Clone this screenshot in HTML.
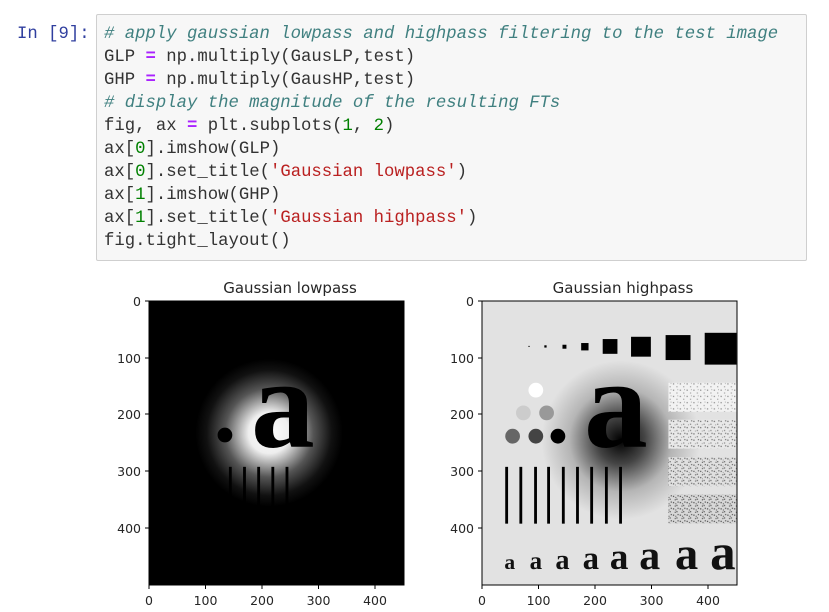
<!DOCTYPE html>
<html><head><meta charset="utf-8"><style>
body{margin:0;width:829px;height:612px;background:#fff;position:relative;overflow:hidden}
.prompt{position:absolute;left:17px;top:23px;font:17.3px/23px "Liberation Mono",monospace;color:#303f9f}
.code{position:absolute;left:96px;top:14px;width:711px;height:247px;background:#f7f7f7;border:1px solid #cfcfcf;border-radius:2px;box-sizing:border-box}
pre{margin:0;position:absolute;left:7px;top:8px;font:17.3px/23px "Liberation Mono",monospace;color:#333}
.c{color:#408080;font-style:italic}.o{color:#aa22ff;font-weight:bold}.n{color:#008000}.s{color:#ba2121}
svg{position:absolute;left:0;top:0}
.dj{font-family:"DejaVu Sans",sans-serif}
.sf{font-family:"Liberation Serif",serif}
</style></head><body>
<div class="prompt">In [9]:</div>
<div class="code"><pre><span class="c"># apply gaussian lowpass and highpass filtering to the test image</span>
GLP <span class="o">=</span> np.multiply(GausLP,test)
GHP <span class="o">=</span> np.multiply(GausHP,test)
<span class="c"># display the magnitude of the resulting FTs</span>
fig, ax <span class="o">=</span> plt.subplots(<span class="n">1</span>, <span class="n">2</span>)
ax[<span class="n">0</span>].imshow(GLP)
ax[<span class="n">0</span>].set_title(<span class="s">'Gaussian lowpass'</span>)
ax[<span class="n">1</span>].imshow(GHP)
ax[<span class="n">1</span>].set_title(<span class="s">'Gaussian highpass'</span>)
fig.tight_layout()</pre></div>

<svg width="829" height="612">
<defs>
<radialGradient id="glow" cx="212" cy="232" r="130" gradientUnits="userSpaceOnUse">
<stop offset="0" stop-color="#fff"/><stop offset="0.28" stop-color="#eee"/><stop offset="0.6" stop-color="#555"/><stop offset="0.85" stop-color="#111"/><stop offset="1" stop-color="#000"/></radialGradient>
<radialGradient id="halo" cx="245" cy="245" r="140" gradientUnits="userSpaceOnUse">
<stop offset="0" stop-color="#000"/><stop offset="0.3" stop-color="#444"/><stop offset="0.65" stop-color="#b5b5b5"/><stop offset="1" stop-color="#e2e2e2"/></radialGradient>
<pattern id="p1" width="12" height="11" patternUnits="userSpaceOnUse"><rect width="12" height="11" fill="#f2f2f2"/><rect x="1" y="2" width="2" height="2" fill="#777"/><rect x="7" y="7" width="2" height="2" fill="#999"/><rect x="9" y="1" width="1" height="2" fill="#888"/></pattern>
<pattern id="p2" width="12" height="11" patternUnits="userSpaceOnUse"><rect width="12" height="11" fill="#e8e8e8"/><rect x="1" y="2" width="2" height="2" fill="#555"/><rect x="7" y="7" width="2" height="2" fill="#777"/><rect x="9" y="1" width="2" height="2" fill="#666"/><rect x="4" y="8" width="1" height="2" fill="#777"/></pattern>
<pattern id="p3" width="12" height="11" patternUnits="userSpaceOnUse"><rect width="12" height="11" fill="#e0e0e0"/><rect x="1" y="2" width="2" height="2" fill="#444"/><rect x="7" y="7" width="2" height="2" fill="#555"/><rect x="9" y="1" width="2" height="2" fill="#555"/><rect x="4" y="8" width="2" height="2" fill="#666"/><rect x="5" y="4" width="1" height="2" fill="#777"/></pattern>
<pattern id="p4" width="12" height="11" patternUnits="userSpaceOnUse"><rect width="12" height="11" fill="#d8d8d8"/><rect x="1" y="2" width="2" height="2" fill="#333"/><rect x="7" y="7" width="2" height="2" fill="#444"/><rect x="9" y="1" width="2" height="2" fill="#444"/><rect x="4" y="8" width="2" height="2" fill="#555"/><rect x="5" y="4" width="2" height="2" fill="#666"/></pattern>
</defs>
<!-- left -->
<text class="dj" x="290" y="293" font-size="15" text-anchor="middle" fill="#262626">Gaussian lowpass</text>
<svg x="149" y="301" width="255" height="284" viewBox="0 0 450 500" preserveAspectRatio="none">
<rect width="450" height="500" fill="#000"/>
<rect width="450" height="500" fill="url(#glow)"/>
<text class="sf" x="180" y="257" font-size="225" font-weight="bold" fill="#000">a</text>
<circle cx="134" cy="236" r="13" fill="#000"/>
<g fill="#000"><rect x="141" y="292" width="5" height="100"/><rect x="166" y="292" width="5" height="100"/><rect x="191" y="292" width="5" height="100"/><rect x="216" y="292" width="5" height="100"/><rect x="241" y="292" width="5" height="100"/></g>
</svg>
<rect x="149" y="301" width="255" height="284" fill="none" stroke="#000" stroke-width="1"/>
<g stroke="#000"><line x1="149" y1="585" x2="149" y2="589"/><line x1="205.5" y1="585" x2="205.5" y2="589"/><line x1="262" y1="585" x2="262" y2="589"/><line x1="318.5" y1="585" x2="318.5" y2="589"/><line x1="375" y1="585" x2="375" y2="589"/>
<line x1="145" y1="301" x2="149" y2="301"/><line x1="145" y1="358" x2="149" y2="358"/><line x1="145" y1="414" x2="149" y2="414"/><line x1="145" y1="471" x2="149" y2="471"/><line x1="145" y1="528" x2="149" y2="528"/></g>
<g class="dj" font-size="12.5" fill="#262626" text-anchor="middle"><text x="149" y="605">0</text><text x="205.5" y="605">100</text><text x="262" y="605">200</text><text x="318.5" y="605">300</text><text x="375" y="605">400</text></g>
<g class="dj" font-size="12.5" fill="#262626" text-anchor="end"><text x="141" y="306">0</text><text x="141" y="363">100</text><text x="141" y="419">200</text><text x="141" y="476">300</text><text x="141" y="533">400</text></g>
<!-- right -->
<text class="dj" x="623" y="293" font-size="15" text-anchor="middle" fill="#262626">Gaussian highpass</text>
<svg x="482" y="301" width="255" height="284" viewBox="0 0 450 500" preserveAspectRatio="none">
<rect width="450" height="500" fill="#e2e2e2"/>
<rect width="450" height="500" fill="url(#halo)"/>
<g fill="#000"><rect x="82" y="79" width="2" height="2"/><rect x="110" y="78" width="4" height="4"/><rect x="142" y="77" width="7" height="7"/><rect x="175" y="74" width="13" height="13"/><rect x="213" y="67" width="26" height="26"/><rect x="263" y="63" width="35" height="35"/><rect x="324" y="60" width="44" height="44"/><rect x="393" y="56" width="56" height="56"/></g>
<text class="sf" x="180" y="257" font-size="225" font-weight="bold" fill="#000">a</text>
<circle cx="95" cy="157" r="13" fill="#fff"/><circle cx="73" cy="197" r="13" fill="#ccc"/><circle cx="114" cy="197" r="13" fill="#999"/>
<circle cx="54" cy="238" r="13" fill="#666"/><circle cx="95" cy="238" r="13" fill="#444"/><circle cx="134" cy="238" r="13" fill="#000"/>
<g fill="#000"><rect x="41" y="292" width="5" height="100"/><rect x="66" y="292" width="5" height="100"/><rect x="92" y="292" width="5" height="100"/><rect x="115" y="292" width="5" height="100"/><rect x="141" y="292" width="5" height="100"/><rect x="166" y="292" width="5" height="100"/><rect x="191" y="292" width="5" height="100"/><rect x="217" y="292" width="5" height="100"/><rect x="242" y="292" width="5" height="100"/></g>
<rect x="329" y="144" width="120" height="51" fill="url(#p1)"/><rect x="329" y="209" width="120" height="51" fill="url(#p2)"/><rect x="329" y="275" width="120" height="51" fill="url(#p3)"/><rect x="329" y="340" width="120" height="52" fill="url(#p4)"/>
<g class="sf" fill="#111" text-anchor="middle" font-weight="bold"><text x="49" y="472" font-size="38">a</text><text x="95" y="472" font-size="44">a</text><text x="142" y="472" font-size="50">a</text><text x="192" y="472" font-size="58">a</text><text x="242" y="472" font-size="66">a</text><text x="296" y="472" font-size="74">a</text><text x="361" y="472" font-size="82">a</text><text x="425" y="472" font-size="90">a</text></g>
</svg>
<rect x="482" y="301" width="255" height="284" fill="none" stroke="#000" stroke-width="1"/>
<g stroke="#000"><line x1="482" y1="585" x2="482" y2="589"/><line x1="538.5" y1="585" x2="538.5" y2="589"/><line x1="595" y1="585" x2="595" y2="589"/><line x1="651.5" y1="585" x2="651.5" y2="589"/><line x1="708" y1="585" x2="708" y2="589"/>
<line x1="478" y1="301" x2="482" y2="301"/><line x1="478" y1="358" x2="482" y2="358"/><line x1="478" y1="414" x2="482" y2="414"/><line x1="478" y1="471" x2="482" y2="471"/><line x1="478" y1="528" x2="482" y2="528"/></g>
<g class="dj" font-size="12.5" fill="#262626" text-anchor="middle"><text x="482" y="605">0</text><text x="538.5" y="605">100</text><text x="595" y="605">200</text><text x="651.5" y="605">300</text><text x="708" y="605">400</text></g>
<g class="dj" font-size="12.5" fill="#262626" text-anchor="end"><text x="474" y="306">0</text><text x="474" y="363">100</text><text x="474" y="419">200</text><text x="474" y="476">300</text><text x="474" y="533">400</text></g>
</svg>
</body></html>
